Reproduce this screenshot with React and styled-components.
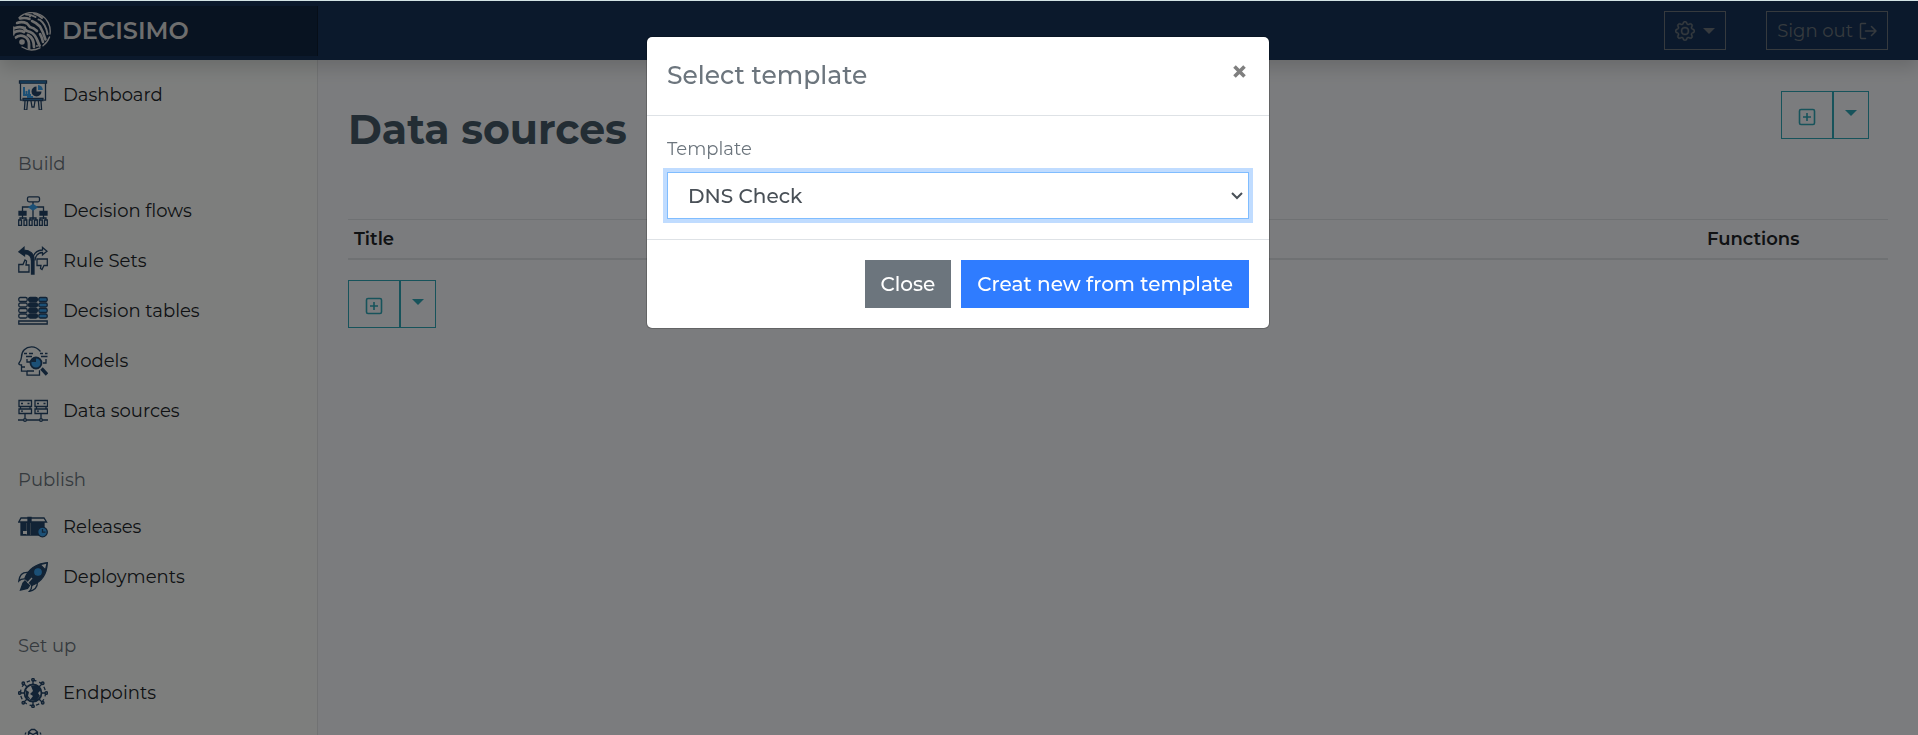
import React from "react";
import styled, { createGlobalStyle, css } from "styled-components";
import { BsGear } from "react-icons/bs";

const NAVY = "#24466a";
const BLUE = "#38a0ec";

const GlobalStyle = createGlobalStyle`
  *, *::before, *::after { box-sizing: border-box; }
  body {
    margin: 0;
    font-family: Montserrat, Inter, "Liberation Sans", sans-serif;
    font-size: 18px;
    line-height: 24px;
    color: #212529;
    background: #f7f9fc;
  }
  button, select { font-family: inherit; }
`;

const Page = styled.div`
  height: 100vh;
  overflow: hidden;
  display: flex;
  flex-direction: column;
  border-top: 1px solid #d3e3e4;
`;

const TopBar = styled.header`
  position: relative;
  z-index: 1;
  flex: none;
  display: flex;
  align-items: center;
  justify-content: space-between;
  height: 59px;
  padding-right: 30px;
  background: #163358;
  box-shadow: 0 8px 16px rgba(0, 0, 0, 0.15);
`;

const Brand = styled.a`
  display: flex;
  align-items: center;
  gap: 10px;
  width: 318px;
  height: 50px;
  padding-left: 12px;
  background: rgba(0, 0, 0, 0.25);
  box-shadow: inset -1px 0 0 rgba(0, 0, 0, 0.25);
  color: #dcdcdc;
  font-size: 24px;
  font-weight: 600;
  text-decoration: none;
`;

const TopActions = styled.div`
  display: flex;
  gap: 40px;
`;

const TopButton = styled.button`
  display: flex;
  align-items: center;
  justify-content: center;
  gap: ${(p) => (p.$wide ? "6px" : "8px")};
  height: 39px;
  padding: 0 10px;
  border: 1px solid #6c757d;
  background: transparent;
  color: #6c757d;
  font-size: 18px;
`;

const GearIcon = styled(BsGear)`
  stroke: currentColor;
  stroke-width: 0.3;
`;

const Caret = styled.span`
  border: solid transparent;
  border-width: 6px 6px 0;
  border-top-color: currentColor;
`;

const Body = styled.div`
  flex: 1;
  display: flex;
  min-height: 0;
`;

const Sidebar = styled.nav`
  flex: none;
  width: 318px;
  padding-top: 10px;
  overflow: hidden;
  background: #fafdfb;
  border-right: 1px solid #e2e5e6;
`;

const SectionTitle = styled.h2`
  margin: 32px 18px 10px;
  font-size: 18px;
  line-height: 24px;
  font-weight: 400;
  color: #6c757d;
`;

const NavList = styled.ul`
  margin: 0;
  padding: 0;
  list-style: none;
`;

const NavLink = styled.a`
  display: flex;
  align-items: center;
  gap: 15px;
  height: 50px;
  padding-left: 18px;
  color: #212529;
  text-decoration: none;
`;

const Main = styled.main`
  flex: 1;
  min-width: 0;
  padding: 31px 30px 0;
`;

const TitleRow = styled.div`
  display: flex;
  align-items: flex-start;
  justify-content: space-between;
  padding-right: 19px;
  height: 128px;
`;

const Heading = styled.h1`
  margin: 14px 0 0;
  font-size: 41px;
  line-height: 48px;
  font-weight: 700;
  color: #465a69;
`;

const SplitButton = styled.div`
  display: inline-flex;
`;

const OutlineButton = styled.button`
  display: flex;
  align-items: center;
  justify-content: center;
  width: ${(p) => (p.$narrow ? "37px" : "51px")};
  height: 48px;
  padding: ${(p) => (p.$narrow ? "0 0 4px" : "4px 0 0")};
  border: 1px solid #2fa6b6;
  background: transparent;
  color: #2fa6b6;
  & + & { border-left-width: 2px; }
  ${(p) => !p.$narrow && css`border-right: 0;`}
`;

const Table = styled.table`
  width: 100%;
  margin-bottom: 20px;
  border-collapse: separate;
  border-spacing: 0;
`;

const HeadCell = styled.th`
  width: ${(p) => p.$width || "auto"};
  padding: 7px 6px;
  border-top: 1px solid #dee2e6;
  border-bottom: 2px solid #dee2e6;
  text-align: left;
  font-size: 18px;
  font-weight: 600;
  line-height: 24px;
  color: #212529;
`;

const Backdrop = styled.div`
  position: fixed;
  inset: 1px 0 0;
  z-index: 10;
  display: flex;
  justify-content: center;
  align-items: flex-start;
  padding: 35px 18px 35px 16px;
  background: rgba(0, 0, 0, 0.5);
`;

const Dialog = styled.section`
  width: 100%;
  max-width: 624px;
  background: #fff;
  background-clip: padding-box;
  border: 1px solid rgba(0, 0, 0, 0.2);
  border-radius: 6px;
  color: #6c757d;
`;

const DialogHeader = styled.header`
  display: flex;
  align-items: flex-start;
  justify-content: space-between;
  padding: 20px 20px 22px;
  border-bottom: 1px solid #dee2e6;
`;

const DialogTitle = styled.h2`
  margin: 0;
  font-size: 25px;
  line-height: 36px;
  font-weight: 500;
`;

const CloseButton = styled.button`
  display: flex;
  padding: 8px 3px;
  border: 0;
  background: none;
  color: #7f7f7f;
`;

const DialogBody = styled.div`
  display: flex;
  flex-direction: column;
  gap: 10px;
  padding: 20px;
`;

const FieldLabel = styled.label`
  line-height: 26px;
`;

const SelectBox = styled.div`
  position: relative;
  color: #495057;
`;

const Select = styled.select`
  display: block;
  appearance: none;
  width: 100%;
  height: 47px;
  padding: 0 20px;
  border: 1px solid #80bdff;
  border-radius: 0;
  outline: 0;
  background: #fff;
  box-shadow: 0 0 0 4px #c0dcff;
  color: inherit;
  font-size: 20px;
  font-weight: 500;
`;

const Chevron = styled.svg`
  position: absolute;
  top: 20px;
  right: 6px;
  pointer-events: none;
`;

const DialogFooter = styled.footer`
  display: flex;
  justify-content: flex-end;
  gap: 10px;
  padding: 20px;
  border-top: 1px solid #dee2e6;
`;

const Button = styled.button`
  height: 48px;
  padding: 0 16px;
  border: 0;
  background: ${(p) => (p.$primary ? "#2f7cff" : "#6c757d")};
  color: #fff;
  font-size: 20px;
  font-weight: ${(p) => (p.$primary ? 600 : 500)};
  font-weight: 500;
`;

function Icon({ children, size = 30 }) {
  return (
    <svg width={size} height={size} viewBox="0 0 30 30" fill="none" stroke={NAVY} strokeWidth="1.3" aria-hidden="true">
      {children}
    </svg>
  );
}

const LogoMark = () => (
  <svg width="40" height="40" viewBox="0 0 40 40" fill="none" stroke="#dcdcdc" strokeLinecap="round" aria-hidden="true">
    <defs>
      <clipPath id="globe"><circle cx="20" cy="20" r="18.500" /></clipPath>
    </defs>
    <g clipPath="url(#globe)">
      <circle cx="10" cy="31" r="2.800" fill="#dcdcdc" stroke="none" />
      <path strokeWidth="2.800" d="M3 27c6-5 14-1 14 6v6M1 22c4-2.500 8-2.500 11-1M16 24c4 2 6 6 6 12M3 17c3-1 6-1 8-.4l4 3.400c5 1 8 4 9.500 7.500l3 7" />
      <path strokeWidth="2.600" d="M5 12c4-1.500 7-1 10 .5l3 3.500c3 .6 5 2 7 4M28 23c1.500 2.500 2.500 5 3 8M8 7.500c4-1 7-.5 9.500.5M20 10c4 1.500 6 3.500 8 5.500l3 6 2.500 7" />
      <path strokeWidth="2" d="M14 3.500c4 0 7 1 9.500 2.500M28 9c4 3 6.500 8 7.500 14M22 2.500c3 .8 6 2.500 8 4.500M26.500 8.500v.1M18 5.500v.1M13 16.500v.1M25 35v.1" />
    </g>
    <path strokeWidth="1.400" d="M7 6.700A18.500 18.500 0 0 1 38 23M1.800 24V16M10 36A18.500 18.500 0 0 0 28 36.800M31 34.800A18.500 18.500 0 0 0 37.500 26" />
  </svg>
);

const SignOutIcon = () => (
  <svg width="18" height="18" viewBox="0 0 18 18" fill="none" stroke="currentColor" strokeWidth="1.500" strokeLinecap="round" strokeLinejoin="round" aria-hidden="true">
    <path d="M6.500 1.500h-4a1 1 0 0 0-1 1v13a1 1 0 0 0 1 1h4M6.500 9h10.500M12.500 4.500L17 9l-4.500 4.500" />
  </svg>
);

const PlusSquareIcon = () => (
  <svg width="18" height="18" viewBox="0 0 18 18" fill="none" stroke="currentColor" strokeWidth="1.600" aria-hidden="true">
    <rect x="1.500" y="1.500" width="15" height="15" rx="1.500" />
    <path d="M9 5v8M5 9h8" />
  </svg>
);

const DashboardIcon = () => (
  <Icon>
    <path fill={BLUE} d="M1.500.8h27v2.400h-27zM5 18.500h20v2H5z" />
    <path d="M2.500 3.200v17h2M27.500 3.200v17h-2M7 21l-.6 9h2.400l.8-9M23 21l.6 9h-2.400l-.8-9M13 21l1 6h2l1-6" />
    <path stroke={BLUE} strokeWidth="2" d="M6 7v8M8.500 11v4M11 9.500V15M5 15h8M9 17h6" />
    <path fill={NAVY} stroke="none" d="M18.500 6.500v5h5a5 5 0 1 1-5-5z" />
    <path fill={BLUE} stroke="none" d="M20 5a5 5 0 0 1 4.800 5H20z" />
  </Icon>
);

const FlowIcon = () => (
  <Icon>
    <rect x="9.500" y=".8" width="12" height="5" rx="1.500" />
    <path d="M15 6v18M4.500 15v-4h21v4M4.500 19v4M25.500 19v4M2 24v-2h6v2M12 24v-2h6v2M22 24v-2h6v2" />
    <path fill={BLUE} stroke={BLUE} d="M15 8.500l4 2.700-4 2.700-4-2.700z" />
    <path fill={NAVY} d="M1 15.500h7v3.500H1zM22 15.500h7v3.500h-7z" />
    <path d="M.7 24h2.800v5.300H.7zM6 24h2.800v5.300H6zM11.300 24h2.800v5.300h-2.800zM16.500 24h2.800v5.300h-2.800zM21.500 24h2.800v5.300h-2.800zM26.500 24h2.800v5.300h-2.800z" />
  </Icon>
);

const RuleIcon = () => (
  <Icon>
    <path fill={NAVY} d="M13.500 28V15c0-5-3-7.500-7-7.500v2.300L1 5.800 6 1.500v2.700c6 0 10 3.300 10 9.500V28z" />
    <path d="M15.500 10C17 6 20 4.200 24.500 4V1.500L29 5.300l-4.500 3.500V6.500c-5 .3-7 3-7.500 8" />
    <path d="M.8 18.500H5L7 14l1.500 1-.5 4h3v7H.8zM19 13h10.300v6.500H26l-2 4-1.500-1 .5-3h-4z" />
  </Icon>
);

const TablesIcon = () => (
  <Icon>
    {[1.500, 7, 12.500, 18].map((y) => (
      <g key={y}>
        <rect x=".8" y={y} width="8.400" height="4" rx="1.500" />
        <rect x="10.600" y={y} width="8.800" height="4" rx="1.500" fill={NAVY} />
        <rect x="20.800" y={y} width="8.400" height="4" rx="1.500" fill={BLUE} />
      </g>
    ))}
    <path d="M.8 25h28.400v3H.8z" />
  </Icon>
);

const ModelsIcon = () => (
  <Icon>
    <path d="M22.500 5.500C20 2.500 17.500.7 13.500.8 7.500 1 3.500 5 3.500 11c0 2-.2 3-2.700 6.500 0 1 .7 1.500 2.700 1.500v6.200H9v4h12.500v-5M4 21h3M9 25h7" />
    <path d="M6 7.500h3M11 7.500h4M8 10.500h6M22 7.500h3M27 7.500h2.500M23 10.500h6.500M9 13v3h3M25 17h3v-4" />
    <circle cx="18" cy="17" r="5.500" fill={BLUE} strokeWidth="1.800" />
    <path fill={NAVY} stroke="none" d="M13 16h5v-4a5 5 0 0 0-5 4z" />
    <path strokeWidth="3.400" d="M23.500 22.500l5.500 6" />
  </Icon>
);

const SourcesIcon = () => (
  <Icon>
    <path d="M1 4.500h12.500v6H1zM17 4.500h12.500v6H17zM1 13h12.500v4.500H1zM17 13h12.500v4.500H17zM2.500 10.500v2.500M12 10.500v2.500M18.500 10.500v2.500M28 10.500v2.500M7 17.500v5M23 17.500v5M0 24h5.500M8.500 24h13M24.500 24H30M3 7.500h2M9.500 7.500h2M19 7.500h2M25.500 7.500h2M3 15.200h2M19 15.200h2" />
    <circle cx="7" cy="24" r="1.400" />
    <circle cx="23" cy="24" r="1.400" />
  </Icon>
);

const ReleasesIcon = () => (
  <Icon>
    <path fill={NAVY} d="M3 10h23v13H3z" />
    <path fill="#fafdfb" d="M3 6h23l2.500 4H.8z" />
    <path fill={NAVY} d="M10 5.500h3v5h-3z" />
    <path stroke="#8d9aa8" strokeWidth=".6" d="M8.500 11v12M12.500 11v12" />
    <path fill="#fafdfb" stroke="none" d="M5 19h4v3H5z" />
    <circle cx="24.500" cy="20" r="4.800" fill={BLUE} />
    <path d="M24.500 17v3.200h3" />
  </Icon>
);

const RocketIcon = () => (
  <Icon>
    <path fill={NAVY} d="M7 16C10 8 17 2 29.200.8 29 12 23 20 14 23.500z" />
    <path fill="#fafdfb" d="M22 2.500l7.200-1.700L27.500 8z" />
    <circle cx="20" cy="10" r="3.200" fill={BLUE} stroke={BLUE} />
    <path d="M10 10.500C4 10 1.500 13 .8 19c2-2 4-2.500 7-2M19.500 20c0 5-2 8-8 9.300 2-2 2.500-4 2-6.500" />
    <path fill={NAVY} d="M7 19l4.500 4.500-2 3L2.500 28 5 21z" />
    <path stroke="#fafdfb" d="M14 16l-4.500 5" />
  </Icon>
);

const EndpointsIcon = () => (
  <Icon>
    <circle cx="15" cy="15" r="12.500" strokeDasharray="3.500 3" />
    <circle cx="15" cy="15" r="8.500" strokeWidth="1.800" />
    <path fill={NAVY} stroke="none" d="M13 8l6-1 4 5-3 3 2 3-4 5-6-1 3-4-3-2 3-3zM8 12l3 2-1 4 3 4-5-3z" />
    <path d="M15 2v5M15 23v5M2 15h5M23 15h5M5.800 5.800l3.500 3.500M20.700 20.700l3.500 3.500M24.200 5.800l-3.500 3.500M9.300 20.700l-3.500 3.500" />
    {[[15, 1.7], [15, 28.3], [1.7, 15], [28.3, 15], [5.3, 5.3], [24.7, 24.7], [24.7, 5.3], [5.3, 24.7]].map(([x, y]) => (
      <circle key={`${x}-${y}`} cx={x} cy={y} r="1.300" fill="#8d9aa8" />
    ))}
  </Icon>
);

const UsersIcon = () => (
  <Icon>
    <path d="M10.500 6V4l3-2.500h3l3 2.500v5l-4.500 2.500L10.500 9zM10.500 4l4.500 2.500L19.500 4M7 6.500l1-2M23 6.500l-1-2" />
  </Icon>
);

const sections = [
  { items: [["Dashboard", DashboardIcon]] },
  {
    title: "Build",
    items: [
      ["Decision flows", FlowIcon],
      ["Rule Sets", RuleIcon],
      ["Decision tables", TablesIcon],
      ["Models", ModelsIcon],
      ["Data sources", SourcesIcon],
    ],
  },
  { title: "Publish", items: [["Releases", ReleasesIcon], ["Deployments", RocketIcon]] },
  { title: "Set up", items: [["Endpoints", EndpointsIcon], ["", UsersIcon]] },
];

const AddButtons = () => (
  <SplitButton>
    <OutlineButton type="button" aria-label="Add data source">
      <PlusSquareIcon />
    </OutlineButton>
    <OutlineButton type="button" $narrow aria-label="More options">
      <Caret />
    </OutlineButton>
  </SplitButton>
);

export default function App() {
  return (
    <>
      <GlobalStyle />
      <Page>
        <TopBar>
          <Brand href="#">
            <LogoMark />
            DECISIMO
          </Brand>
          <TopActions>
            <TopButton type="button" aria-label="Settings">
              <GearIcon size={20} />
              <Caret />
            </TopButton>
            <TopButton type="button" $wide>
              Sign out
              <SignOutIcon />
            </TopButton>
          </TopActions>
        </TopBar>
        <Body>
          <Sidebar>
            {sections.map((section, i) => (
              <React.Fragment key={i}>
                {section.title && <SectionTitle>{section.title}</SectionTitle>}
                <NavList>
                  {section.items.map(([label, Glyph]) => (
                    <li key={label}>
                      <NavLink href="#" aria-label={label || "More"}>
                        <Glyph />
                        {label}
                      </NavLink>
                    </li>
                  ))}
                </NavList>
              </React.Fragment>
            ))}
          </Sidebar>
          <Main>
            <TitleRow>
              <Heading>Data sources</Heading>
              <AddButtons />
            </TitleRow>
            <Table>
              <thead>
                <tr>
                  <HeadCell>Title</HeadCell>
                  <HeadCell $width="187px">Functions</HeadCell>
                </tr>
              </thead>
            </Table>
            <AddButtons />
          </Main>
        </Body>
      </Page>
      <Backdrop>
        <Dialog role="dialog" aria-modal="true" aria-labelledby="dialog-title">
          <DialogHeader>
            <DialogTitle id="dialog-title">Select template</DialogTitle>
            <CloseButton type="button" aria-label="Close dialog">
              <svg width="13" height="13" viewBox="0 0 13 13" stroke="currentColor" strokeWidth="3.600" aria-hidden="true">
                <path d="M1.500 1.500l10 10M11.500 1.500l-10 10" />
              </svg>
            </CloseButton>
          </DialogHeader>
          <DialogBody>
            <FieldLabel htmlFor="template">Template</FieldLabel>
            <SelectBox>
              <Select id="template" defaultValue="dns">
                <option value="dns">DNS Check</option>
              </Select>
              <Chevron width="12" height="8" viewBox="0 0 12 8" fill="none" stroke="currentColor" strokeWidth="2" aria-hidden="true">
                <path d="M1 1l5 5 5-5" />
              </Chevron>
            </SelectBox>
          </DialogBody>
          <DialogFooter>
            <Button type="button">Close</Button>
            <Button type="button" $primary>Creat new from template</Button>
          </DialogFooter>
        </Dialog>
      </Backdrop>
    </>
  );
}
